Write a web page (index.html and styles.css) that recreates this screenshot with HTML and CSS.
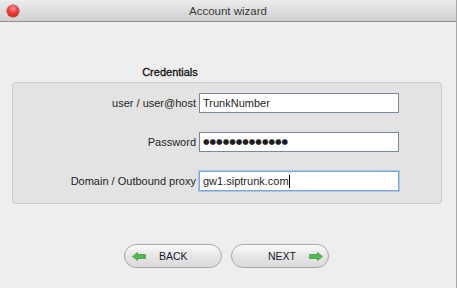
FILE: index.html
```html
<!DOCTYPE html>
<html lang="en">

<head>
    <meta charset="UTF-8">
    <title>Account wizard</title>
    <link rel="stylesheet" href="styles.css">
</head>

<body>
    <div class="window">
        <div class="titlebar">
            <span class="close"></span>
            <span class="title">Account wizard</span>
        </div>

        <div class="content">
            <div class="section-title">Credentials</div>

            <div class="panel">
                <div class="row">
                    <label class="field-label">user / user@host</label>
                    <div class="field">TrunkNumber</div>
                </div>
                <div class="row">
                    <label class="field-label">Password</label>
                    <div class="field password">&#9679;&#9679;&#9679;&#9679;&#9679;&#9679;&#9679;&#9679;&#9679;&#9679;&#9679;&#9679;&#9679;</div>
                </div>
                <div class="row">
                    <label class="field-label">Domain / Outbound proxy</label>
                    <div class="field focused">gw1.siptrunk.com<span class="caret"></span></div>
                </div>
            </div>

            <div class="buttons">
                <button class="pill back">
                    <svg class="arrow" width="14" height="9" viewBox="0 0 14 9">
                        <path d="M0.6 4.5 L5.5 0.5 L5.5 2.6 L13.4 2.6 L13.4 6.4 L5.5 6.4 L5.5 8.5 Z" fill="#4cc24c" stroke="#2f8f2f" stroke-width="0.7"/>
                    </svg>
                    <span>BACK</span>
                </button>
                <button class="pill next">
                    <span>NEXT</span>
                    <svg class="arrow" width="14" height="9" viewBox="0 0 14 9">
                        <path d="M13.4 4.5 L8.5 0.5 L8.5 2.6 L0.6 2.6 L0.6 6.4 L8.5 6.4 L8.5 8.5 Z" fill="#4cc24c" stroke="#2f8f2f" stroke-width="0.7"/>
                    </svg>
                </button>
            </div>
        </div>
    </div>
</body>

</html>
```

FILE: styles.css
```css
:root {
    --bg: #eeeeee;
    --panel: #e3e3e3;
    --panel-border: #c9c9c9;
    --text: #1e1e1e;
    --input-border: #7a8898;
    --focus: #7fa6dc;
}

body {
    margin: 0;
    padding: 0;
    background-color: var(--bg);
    font-family: 'Liberation Sans', Arial, sans-serif;
    color: var(--text);
}

.window {
    width: 457px;
    height: 288px;
    box-sizing: border-box;
    border-right: 1px solid #a9a9a9;
    overflow: hidden;
}

.titlebar {
    height: 21px;
    background: linear-gradient(#ececec, #cfcfcf);
    border-bottom: 1px solid #8c8c8c;
    display: flex;
    align-items: center;
    justify-content: center;
    position: relative;
}

.close {
    position: absolute;
    left: 7px;
    top: 5px;
    width: 12px;
    height: 12px;
    border-radius: 50%;
    background: radial-gradient(circle at 50% 30%, #ff9a9a 0, #f03a3a 45%, #b81414 100%);
    box-shadow: 0 0 0 0.5px #8a2020;
}

.title {
    font-size: 11.5px;
    color: #3a3a3a;
}

.content {
    padding-top: 43px;
}

.section-title {
    font-size: 11px;
    color: #111;
    -webkit-text-stroke: 0.3px #111;
    line-height: 14px;
    width: 340px;
    text-align: center;
    margin-bottom: 3px;
}

.panel {
    margin: 0 14px 0 12px;
    background-color: var(--panel);
    border: 1px solid var(--panel-border);
    border-radius: 4px;
    padding: 10px 0 12px;
    display: flex;
    flex-direction: column;
    gap: 19px;
}

.row {
    display: grid;
    grid-template-columns: 183px 200px;
    column-gap: 3px;
    align-items: center;
}

.field-label {
    font-size: 11px;
    text-align: right;
    white-space: nowrap;
}

.field {
    height: 20px;
    box-sizing: border-box;
    background: #fff;
    border: 1px solid var(--input-border);
    font-size: 11px;
    line-height: 18px;
    padding-left: 3px;
}

.password {
    font-family: 'DejaVu Sans', sans-serif;
    font-size: 7.5px;
}

.focused {
    border-color: var(--focus);
    box-shadow: 0 0 0 1px #a9c6ee;
}

.caret {
    display: inline-block;
    width: 1px;
    height: 13px;
    background: #000;
    vertical-align: -3px;
}

.buttons {
    margin-top: 40px;
    display: flex;
    justify-content: center;
    gap: 9px;
    padding-right: 3px;
}

.pill {
    width: 98px;
    height: 24px;
    border-radius: 12px;
    border: 1px solid #a8a8a8;
    background: linear-gradient(#fbfbfb, #e4e4e4 55%, #dadada);
    font-family: 'Liberation Sans', Arial, sans-serif;
    font-size: 10.5px;
    color: #1c2030;
    display: flex;
    align-items: center;
    padding: 0 7px;
    box-sizing: border-box;
}

.back span {
    margin-left: 13px;
}

.next {
    padding-right: 5px;
}

.next span {
    margin-left: 29px;
    margin-right: auto;
}
```
